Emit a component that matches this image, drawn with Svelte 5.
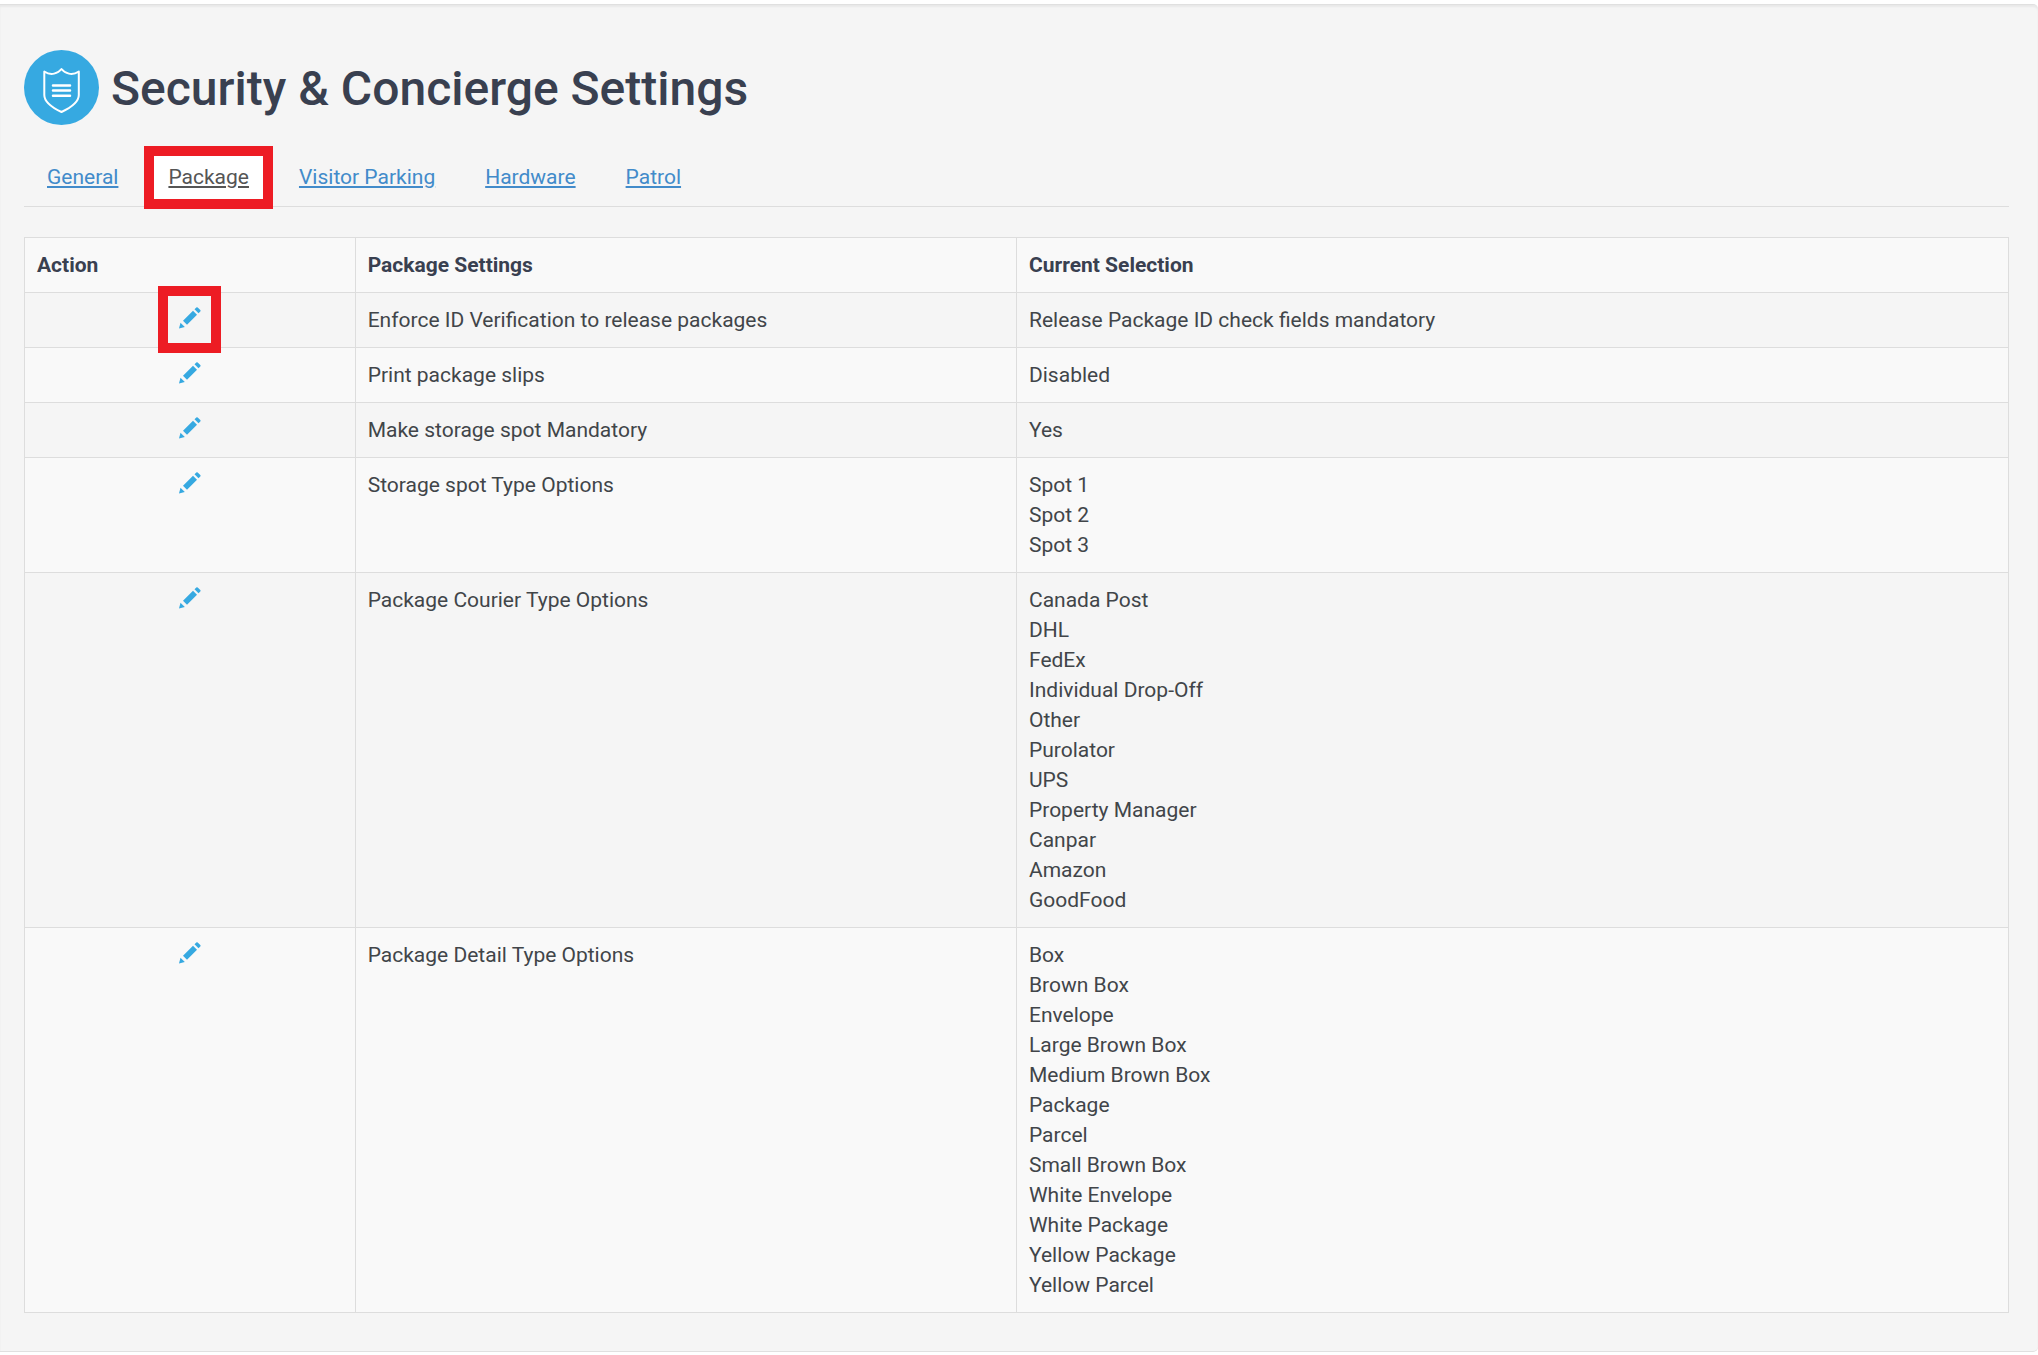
<script>
    const tabs = ['General', 'Package', 'Visitor Parking', 'Hardware', 'Patrol'];
    let activeTab = 'Package';

    const settings = [
        { name: 'Enforce ID Verification to release packages', values: ['Release Package ID check fields mandatory'], marked: true },
        { name: 'Print package slips', values: ['Disabled'] },
        { name: 'Make storage spot Mandatory', values: ['Yes'] },
        { name: 'Storage spot Type Options', values: ['Spot 1', 'Spot 2', 'Spot 3'] },
        {
            name: 'Package Courier Type Options',
            values: ['Canada Post', 'DHL', 'FedEx', 'Individual Drop-Off', 'Other', 'Purolator', 'UPS',
                'Property Manager', 'Canpar', 'Amazon', 'GoodFood']
        },
        {
            name: 'Package Detail Type Options',
            values: ['Box', 'Brown Box', 'Envelope', 'Large Brown Box', 'Medium Brown Box', 'Package', 'Parcel',
                'Small Brown Box', 'White Envelope', 'White Package', 'Yellow Package', 'Yellow Parcel']
        }
    ];
</script>

<main class="well">
    <header class="page-title">
        <svg class="shield" viewBox="0 0 75 75" aria-hidden="true">
            <circle cx="37.5" cy="37.5" r="37.5" fill="#36a9e1" />
            <g fill="none" stroke="#fff" stroke-width="2" stroke-linecap="round" stroke-linejoin="round">
                <path d="M37.5 19 C34 23.500 27 26 20.300 21.500 V45 C20.300 52 29 58 37.500 62 C46 58 54.800 52 54.800 45 V21.500 C48 26 41 23.500 37.500 19 Z" />
                <path stroke-width="2.500" d="M29 35.500 H46 M29 40.500 H46 M29 45.700 H46" />
            </g>
        </svg>
        <h1>Security &amp; Concierge Settings</h1>
    </header>

    <nav class="tabs">
        {#each tabs as tab}
            <a class="tab" class:active={tab === activeTab} href="#{tab}" on:click|preventDefault={() => activeTab = tab}>{tab}</a>
        {/each}
    </nav>

    <table class="settings">
        <thead>
            <tr>
                <th class="col-action">Action</th>
                <th class="col-name">Package Settings</th>
                <th>Current Selection</th>
            </tr>
        </thead>
        <tbody>
            {#each settings as setting}
                <tr>
                    <td class="action">
                        <button class="edit" class:marked={setting.marked} aria-label="Edit">
                            <svg viewBox="0 0 22 22" fill="#36a9e1">
                                <path d="M0 21.500 L1.500 15.800 L5.800 20 Z" />
                                <path d="M4 13.800 L14 3.800 L18 7.800 L8 17.800 Z" />
                                <path d="M15.500 2.300 L17.300 0.500 Q18 0 18.700 0.500 L21.300 3.100 Q22 3.800 21.300 4.500 L19.500 6.300 Z" />
                            </svg>
                        </button>
                    </td>
                    <td>{setting.name}</td>
                    <td>
                        {#each setting.values as value}
                            <div>{value}</div>
                        {/each}
                    </td>
                </tr>
            {/each}
        </tbody>
    </table>
</main>

<style>
    :global(body) {
        background-color: #fff;
        color: #394050;
        font-family: Roboto, "Liberation Sans", sans-serif;
        font-size: 21px;
        line-height: 30px;
    }
    .well {
        margin: 4px 0;
        padding: 45px 29px 38px 24px;
        background-color: #f5f5f5;
        border: 1px solid #e0e0e0;
        border-width: 1px 0;
        border-radius: 0 5px 5px 0;
        box-shadow: inset 0 2px 2px rgba(0, 0, 0, .05);
    }
    .page-title {
        display: flex;
        align-items: center;
        gap: 12px;
    }
    .shield {
        width: 75px;
        height: 75px;
    }
    h1 {
        margin: 0;
        padding-top: 2px;
        font-size: 48px;
        font-weight: 500;
        line-height: 54px;
    }
    .tabs {
        display: flex;
        gap: 4px;
        margin-top: 21px;
        border-bottom: 1px solid #ddd;
    }
    .tab {
        padding: 16px 23px 14px;
        color: #428bca;
    }
    .tab.active {
        margin: 0 -1px -3px;
        padding: 6px 14px 7px;
        color: #555;
        background-color: #fff;
        border: 10px solid #ed1c24;
    }
    .settings {
        width: 100%;
        margin-top: 30px;
        table-layout: fixed;
        border-collapse: collapse;
    }
    .col-action {
        width: 16.667%;
    }
    .col-name {
        width: 33.333%;
    }
    th, td {
        box-sizing: border-box;
        padding: 12px;
        border: 1px solid #ddd;
        text-align: left;
        vertical-align: top;
    }
    th {
        font-weight: 700;
    }
    td {
        color: #414549;
    }
    tr {
        background-color: #f9f9f9;
    }
    tbody tr:nth-child(odd) {
        background-color: #f5f5f5;
    }
    .action {
        text-align: center;
    }
    .edit {
        position: relative;
        display: block;
        width: 22px;
        height: 28px;
        margin: 0 auto;
        padding: 2px 0 4px;
        border: 0;
        background: none;
        cursor: pointer;
    }
    .edit svg {
        display: block;
        width: 22px;
        height: 22px;
    }
    /* highlight frame round the edit icon */
    .marked::after {
        content: '';
        position: absolute;
        inset: -19px -20px -20px -21px;
        border: 10px solid #ed1c24;
    }
</style>
